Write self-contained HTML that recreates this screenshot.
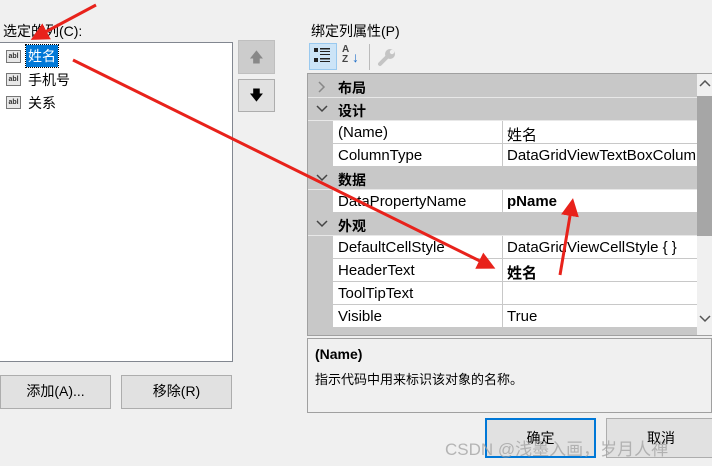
<!DOCTYPE html>
<html><head><meta charset="utf-8"><style>
*{margin:0;padding:0;box-sizing:border-box}
body{width:712px;height:466px;background:#f0f0f0;position:relative;overflow:hidden;font-family:"Liberation Sans","Noto Sans CJK SC",sans-serif;font-size:14px;color:#000}
.a{position:absolute}
.btn{position:absolute;background:#e1e1e1;border:1px solid #adadad;text-align:center;line-height:31px;font-size:14px}
.ic{position:absolute;width:15px;height:13px;border:1px solid #777;background:#e8e8e8;font-size:7px;line-height:11px;text-align:center;font-weight:bold;color:#333}
.row{position:absolute;left:333px;width:364px;height:23px;background:#fff;border-bottom:1px solid #c8c8c8;font-size:15px}
.row .n{position:absolute;left:5px;top:3px}
.row .v{position:absolute;left:169px;top:0;height:22px;border-left:1px solid #c8c8c8;padding-left:4px;padding-top:3px;width:195px;white-space:nowrap;overflow:hidden}
.cat{position:absolute;left:308px;width:389px;height:23px;background:#c8c8c8;border-bottom:1px solid #e8e8e8;font-weight:bold}
.cat span{position:absolute;left:30px;top:3px}
.cat svg{position:absolute;left:8px;top:6px}
</style></head><body>
<div class="a" style="left:3px;top:21px">选定的列(C):</div>
<div class="a" style="left:-1px;top:42px;width:234px;height:320px;background:#fff;border:1px solid #828790"></div>
<div class="ic" style="left:6px;top:50px">abl</div>
<div class="a" style="left:26px;top:45px;background:#0078d7;color:#fff;padding:1px 2px;outline:1px dotted #000">姓名</div>
<div class="ic" style="left:6px;top:73px">abl</div>
<div class="a" style="left:28px;top:70px">手机号</div>
<div class="ic" style="left:6px;top:96px">abl</div>
<div class="a" style="left:28px;top:93px">关系</div>
<div class="a" style="left:238px;top:40px;width:37px;height:34px;background:#ccc;border:1px solid #bfbfbf;color:#888;text-align:center;line-height:32px;font-size:14px">🡅</div>
<div class="a" style="left:238px;top:79px;width:37px;height:33px;background:#e1e1e1;border:1px solid #adadad;text-align:center;line-height:31px;font-size:14px">🡇</div>
<div class="btn" style="left:0;top:375px;width:111px;height:34px">添加(A)...</div>
<div class="btn" style="left:121px;top:375px;width:111px;height:34px">移除(R)</div>

<div class="a" style="left:311px;top:21px">绑定列属性(P)</div>
<div class="a" style="left:309px;top:43px;width:28px;height:27px;background:#cce4f7;border:1px solid #99c9ef"></div>
<svg class="a" style="left:314px;top:47px" width="18" height="18"><g fill="#222"><rect x="0" y="1" width="4" height="4"/><rect x="0" y="11" width="4" height="4"/><rect x="6" y="1" width="10" height="1.5"/><rect x="6" y="4" width="10" height="1"/><rect x="6" y="7" width="10" height="1"/><rect x="6" y="11" width="10" height="1.5"/><rect x="6" y="14" width="10" height="1"/></g></svg>
<div class="a" style="left:342px;top:45px;font-size:10px;font-weight:bold;line-height:10px;color:#444">A<br>Z</div><div class="a" style="left:352px;top:49px;color:#1e6ec8;font-weight:bold">↓</div>
<div class="a" style="left:369px;top:44px;width:1px;height:26px;background:#bbb"></div>
<svg class="a" style="left:377px;top:47px" width="20" height="20"><path d="M3 17 L11 9" stroke="#c4c4c4" stroke-width="4" stroke-linecap="round"/><circle cx="13" cy="7" r="5" fill="#c4c4c4"/><circle cx="15" cy="5" r="2.2" fill="#f0f0f0"/></svg>

<div class="a" style="left:307px;top:73px;width:405px;height:263px;background:#c8c8c8;border:1px solid #a0a0a0"></div>
<div class="cat" style="top:75px"><svg width="10" height="12"><path d="M3 1 L8 6 L3 11" stroke="#888" stroke-width="1.5" fill="none"/></svg><span>布局</span></div>
<div class="cat" style="top:98px"><svg width="12" height="10"><path d="M1 2 L6 7 L11 2" stroke="#444" stroke-width="1.5" fill="none"/></svg><span>设计</span></div>
<div class="row" style="top:121px"><span class="n">(Name)</span><span class="v">姓名</span></div>
<div class="row" style="top:144px"><span class="n">ColumnType</span><span class="v">DataGridViewTextBoxColumn</span></div>
<div class="cat" style="top:167px"><svg width="12" height="10"><path d="M1 2 L6 7 L11 2" stroke="#444" stroke-width="1.5" fill="none"/></svg><span>数据</span></div>
<div class="row" style="top:190px"><span class="n">DataPropertyName</span><span class="v" style="font-weight:bold">pName</span></div>
<div class="cat" style="top:213px"><svg width="12" height="10"><path d="M1 2 L6 7 L11 2" stroke="#444" stroke-width="1.5" fill="none"/></svg><span>外观</span></div>
<div class="row" style="top:236px"><span class="n">DefaultCellStyle</span><span class="v">DataGridViewCellStyle { }</span></div>
<div class="row" style="top:259px"><span class="n">HeaderText</span><span class="v" style="font-weight:bold">姓名</span></div>
<div class="row" style="top:282px"><span class="n">ToolTipText</span><span class="v"></span></div>
<div class="row" style="top:305px"><span class="n">Visible</span><span class="v">True</span></div>
<div class="a" style="left:697px;top:74px;width:15px;height:261px;background:#f0f0f0"></div>
<div class="a" style="left:697px;top:96px;width:15px;height:140px;background:#a6a6a6"></div>
<svg class="a" style="left:699px;top:80px" width="12" height="8"><path d="M1 6 L6 1 L11 6" stroke="#555" stroke-width="1.5" fill="none"/></svg>
<svg class="a" style="left:699px;top:315px" width="12" height="8"><path d="M1 1 L6 6 L11 1" stroke="#555" stroke-width="1.5" fill="none"/></svg>

<div class="a" style="left:307px;top:338px;width:405px;height:75px;border:1px solid #a0a0a0;background:#f0f0f0"></div>
<div class="a" style="left:315px;top:346px;font-weight:bold">(Name)</div>
<div class="a" style="left:315px;top:369px;font-size:13px">指示代码中用来标识该对象的名称。</div>

<div class="btn" style="left:485px;top:418px;width:111px;height:40px;border:2px solid #0078d7;line-height:36px">确定</div>
<div class="btn" style="left:606px;top:418px;width:110px;height:40px;line-height:38px">取消</div>
<div class="a" style="left:445px;top:435px;color:rgba(160,160,160,.75);font-size:17px">CSDN @浅墨入画，岁月人禅</div>

<svg class="a" style="left:0;top:0" width="712" height="466">
<defs><marker id="h" markerWidth="6" markerHeight="6" refX="4" refY="3" orient="auto"><path d="M0,0 L6,3 L0,6 z" fill="#e8221b"/></marker></defs>
<g stroke="#e8221b" stroke-width="3" fill="none" marker-end="url(#h)">
<line x1="96" y1="5" x2="36" y2="37"/>
<line x1="73" y1="60" x2="490" y2="266"/>
<line x1="560" y1="275" x2="572" y2="204"/>
</g></svg>
</body></html>
